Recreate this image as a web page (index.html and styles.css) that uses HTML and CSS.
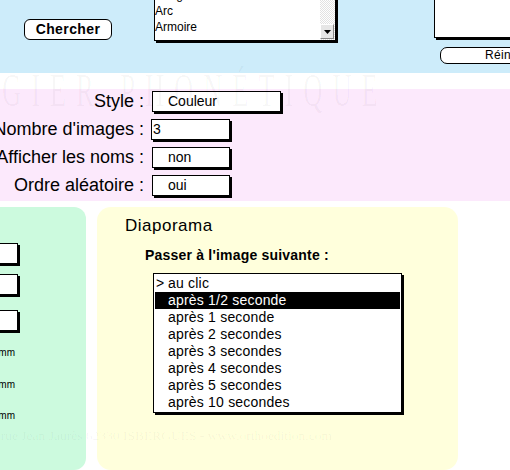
FILE: index.html
```html
<!DOCTYPE html>
<html lang="fr">
<head>
<meta charset="utf-8">
<title>Imagier phonétique</title>
<link rel="stylesheet" href="styles.css">
</head>
<body>
<div class="page">
  <div class="wm-title" aria-hidden="true">GIER PHONÉTIQUE</div>

  <header class="search">
    <button class="btn-search">Chercher</button>
    <div class="listbox">
      <ul class="lb-items">
        <li>Araignée</li>
        <li>Arc</li>
        <li>Armoire</li>
      </ul>
      <div class="lb-scroll">
        <span class="lb-arrow"><svg width="7" height="4" viewBox="0 0 7 4"><path d="M0 0H7L3.5 4Z" fill="#000"/></svg></span>
      </div>
    </div>
    <div class="right-col">
      <div class="right-box"></div>
      <button class="btn-reset">Réinitialiser</button>
    </div>
  </header>

  <section class="options">
    <div class="opt-label">Style :</div>
    <div class="field field-wide">Couleur</div>
    <div class="opt-label">Nombre d'images :</div>
    <div class="field field-input">3</div>
    <div class="opt-label">Afficher les noms :</div>
    <div class="field">non</div>
    <div class="opt-label">Ordre aléatoire :</div>
    <div class="field">oui</div>
  </section>

  <div class="panels">
    <div class="panel-green">
      <div class="g-box g-box1"></div>
      <div class="g-box g-box2"></div>
      <div class="g-box g-box3"></div>
      <div class="g-mm g-mm1">mm</div>
      <div class="g-mm g-mm2">mm</div>
      <div class="g-mm g-mm3">mm</div>
    </div>
    <div class="panel-yellow">
      <div class="dia-title">Diaporama</div>
      <div class="dia-label">Passer à l'image suivante :</div>
      <ul class="dia-list">
        <li><span class="mark">&gt;</span>au clic</li>
        <li class="selected">après 1/2 seconde</li>
        <li>après 1 seconde</li>
        <li>après 2 secondes</li>
        <li>après 3 secondes</li>
        <li>après 4 secondes</li>
        <li>après 5 secondes</li>
        <li>après 10 secondes</li>
      </ul>
    </div>
  </div>

  <div class="wm-address" aria-hidden="true">76-78 rue Jean Jaurès 62330 ISBERGUES - www.orthoedition.com</div>
</div>
</body>
</html>
```
FILE: styles.css
```css
html, body {
  margin: 0;
  padding: 0;
  width: 510px;
  height: 470px;
  overflow: hidden;
  background: #ffffff;
}

.page {
  position: relative;
  width: 510px;
  height: 470px;
  overflow: hidden;
  font-family: "Liberation Sans", Arial, sans-serif;
  color: #000;
}

/* faint watermarks */
.wm-title {
  position: absolute;
  left: 2px;
  top: 68px;
  font-family: "Liberation Serif", "Times New Roman", serif;
  font-size: 46px;
  line-height: 46px;
  letter-spacing: 17px;
  white-space: nowrap;
  color: rgba(0, 0, 0, 0.035);
  transform: scaleX(0.58);
  transform-origin: left top;
  z-index: 3;
  pointer-events: none;
}

.wm-address {
  position: absolute;
  right: 178px;
  top: 428px;
  font-family: "Liberation Serif", "Times New Roman", serif;
  font-size: 13.5px;
  line-height: 16px;
  white-space: nowrap;
  color: rgba(0, 0, 0, 0.045);
  z-index: 3;
  pointer-events: none;
}

/* search band */
.search {
  display: flex;
  align-items: flex-start;
  height: 73px;
  background: #cdecfa;
}

.search > * {
  flex-shrink: 0;
}

.btn-search {
  margin: 19px 0 0 24px;
  width: 88px;
  height: 21px;
  box-sizing: border-box;
  border: 1px solid #000;
  border-radius: 6px;
  background: #fff;
  padding: 0;
  font-family: "Liberation Sans", Arial, sans-serif;
  font-weight: bold;
  font-size: 14px;
  letter-spacing: 0.4px;
  color: #000;
  line-height: 19px;
}

.listbox {
  display: flex;
  margin: -16px 0 0 42px;
  width: 182px;
  height: 57px;
  box-sizing: border-box;
  border: 1px solid #000;
  background: #fff;
  box-shadow: 2px 2px 0 #000;
}

.lb-items {
  list-style: none;
  margin: 0;
  padding: 3px 0 0 0;
  flex: 1;
  font-size: 12px;
  line-height: 15px;
}

.lb-items li {
  white-space: nowrap;
}

.lb-items li + li {
  margin-top: 1px;
}

.lb-scroll {
  width: 15px;
  display: flex;
  flex-direction: column;
  justify-content: flex-end;
  background-color: #f0f0f0;
  background-image: repeating-conic-gradient(#e2e2e2 0 25%, #ffffff 0 50%);
  background-size: 2px 2px;
  padding-bottom: 1px;
}

.lb-arrow {
  display: flex;
  align-items: center;
  justify-content: center;
  width: 14px;
  height: 15px;
  box-sizing: border-box;
  background: #e6e6e6;
  border-top: 1px solid #fff;
  border-left: 1px solid #fff;
  border-right: 1px solid #888;
  border-bottom: 1px solid #888;
}

.right-col {
  display: flex;
  flex-direction: column;
  margin-left: 98px;
}

.right-box {
  margin-top: -20px;
  width: 110px;
  height: 58px;
  box-sizing: border-box;
  border: 1px solid #000;
  background: #fff;
  box-shadow: 2px 2px 0 #000;
}

.btn-reset {
  margin: 9px 0 0 6px;
  width: 157px;
  height: 17px;
  box-sizing: border-box;
  border: 1px solid #000;
  border-radius: 7px;
  background: #fff;
  padding: 0;
  font-family: "Liberation Sans", Arial, sans-serif;
  font-size: 12px;
  letter-spacing: 0.4px;
  line-height: 15px;
  color: #000;
}

/* options */
.options {
  margin-top: 16px;
  height: 112px;
  box-sizing: border-box;
  padding-top: 2px;
  background: #fce9fc;
  display: grid;
  grid-template-columns: 144px auto;
  grid-auto-rows: 21px;
  column-gap: 8px;
  row-gap: 7px;
  justify-items: start;
}

.opt-label {
  display: flex;
  justify-content: flex-end;
  width: 144px;
  white-space: nowrap;
  font-size: 18px;
  line-height: 21px;
}

.field {
  width: 78px;
  height: 21px;
  box-sizing: border-box;
  border: 1px solid #000;
  background: #fff;
  box-shadow: 2px 2px 0 #000;
  font-size: 14px;
  line-height: 19px;
  padding-left: 15px;
  white-space: nowrap;
}

.field-wide {
  width: 129px;
}

.field-input {
  margin-left: -1px;
  width: 79px;
  padding-left: 1px;
}

/* panels */
.panels {
  display: flex;
  gap: 11px;
  margin-top: 6px;
}

.panel-green {
  flex-shrink: 0;
  width: 86px;
  height: 263px;
  background: #ccfade;
  border-radius: 0 12px 12px 0;
  display: flex;
  flex-direction: column;
  padding-top: 36px;
  box-sizing: border-box;
}

.g-box {
  width: 40px;
  height: 21px;
  margin-left: -22px;
  box-sizing: border-box;
  border: 1px solid #000;
  background: #fff;
  box-shadow: 2px 2px 0 #000;
}

.g-box2 { margin-top: 10px; }
.g-box3 { margin-top: 15px; }

.g-mm {
  display: flex;
  justify-content: flex-end;
  width: 15px;
  font-size: 10px;
  line-height: 12px;
  white-space: nowrap;
}

.g-mm1 { margin-top: 16px; }
.g-mm2 { margin-top: 20px; }
.g-mm3 { margin-top: 19px; }

.panel-yellow {
  flex-shrink: 0;
  width: 361px;
  height: 263px;
  background: #ffffdc;
  border-radius: 14px;
  padding: 9px 0 0 28px;
  box-sizing: border-box;
}

.dia-title {
  font-size: 17px;
  line-height: 19px;
  letter-spacing: 0.5px;
}

.dia-label {
  margin: 13px 0 0 20px;
  font-size: 14px;
  font-weight: bold;
  line-height: 15px;
  letter-spacing: 0.2px;
}

.dia-list {
  list-style: none;
  margin: 10px 0 0 28px;
  padding: 1px;
  width: 249px;
  box-sizing: border-box;
  border: 1px solid #000;
  background: #fff;
  box-shadow: 2px 2px 0 #000;
  font-size: 14px;
  line-height: 17px;
  letter-spacing: 0.2px;
}

.dia-list li {
  padding-left: 13px;
  white-space: nowrap;
}

.dia-list .selected {
  background: #000;
  color: #fff;
}

.mark {
  display: inline-block;
  width: 12px;
  margin-left: -12px;
}
```
